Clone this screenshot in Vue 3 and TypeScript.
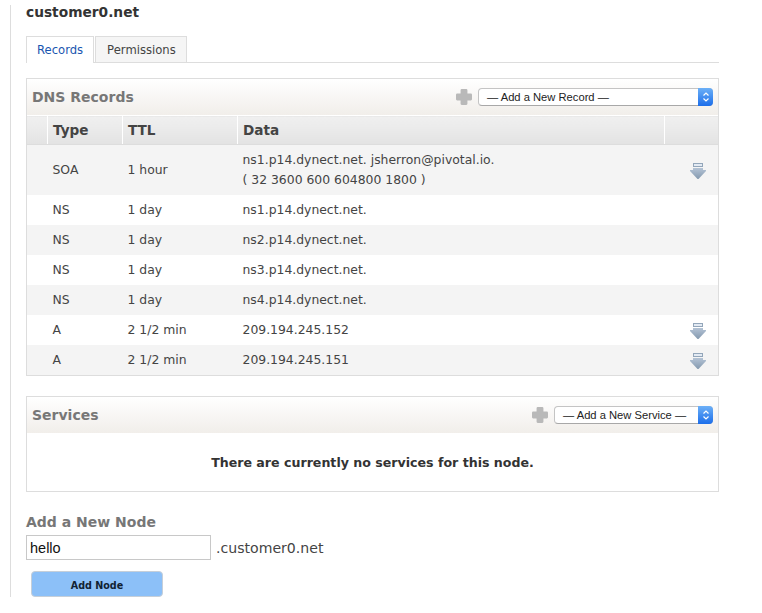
<template>
  <div class="page">
    <h1 class="title">customer0.net</h1>
    <div class="tabs">
      <a class="tab active">Records</a>
      <a class="tab">Permissions</a>
    </div>

    <section class="panel records">
      <header class="panel-head">
        <h2>DNS Records</h2>
        <div class="adder">
          <svg class="plus" width="16" height="16" viewBox="1 1 14 14"><path d="M6 1h4a1 1 0 0 1 1 1v3h3a1 1 0 0 1 1 1v4a1 1 0 0 1-1 1h-3v3a1 1 0 0 1-1 1H6a1 1 0 0 1-1-1v-3H2a1 1 0 0 1-1-1V6a1 1 0 0 1 1-1h3V2a1 1 0 0 1 1-1z" fill="#b9b9b9"/></svg>
          <div class="select wide">
            <span>— Add a New Record —</span>
            <i class="stepper"><svg width="8" height="12" viewBox="0 0 8 12"><path d="M1.500 4.500 4 2l2.500 2.500M1.500 7.500 4 10l2.500-2.500" fill="none" stroke="#fff" stroke-width="1.200"/></svg></i>
          </div>
        </div>
      </header>
      <table>
        <thead>
          <tr>
            <th class="c-blank"></th>
            <th class="c-type">Type</th>
            <th class="c-ttl">TTL</th>
            <th>Data</th>
            <th class="c-act"></th>
          </tr>
        </thead>
        <tbody>
          <tr v-for="(r, i) in records" :key="i" :class="{ soa: r.data.length > 1 }">
            <td></td>
            <td class="t-type">{{ r.type }}</td>
            <td class="t-ttl">{{ r.ttl }}</td>
            <td class="t-data"><div v-for="line in r.data" :key="line">{{ line }}</div></td>
            <td class="t-act">
              <svg v-if="r.edit" width="16" height="16" viewBox="0 0 16 16">
                <defs>
                  <linearGradient :id="`arrow${i}`" x1="0" y1="0" x2="0" y2="1">
                    <stop offset="0" stop-color="#b4c3d5"/>
                    <stop offset="1" stop-color="#8499af"/>
                  </linearGradient>
                </defs>
                <rect x="3.500" y="0.500" width="9" height="3" fill="#e3eaf3" stroke="#93a6ba"/>
                <path d="M3 5h10v2h3v1l-7.500 8h-1L0 8V7h3z" :fill="`url(#arrow${i})`"/>
              </svg>
            </td>
          </tr>
        </tbody>
      </table>
    </section>

    <section class="panel services">
      <header class="panel-head">
        <h2>Services</h2>
        <div class="adder">
          <svg class="plus" width="16" height="16" viewBox="1 1 14 14"><path d="M6 1h4a1 1 0 0 1 1 1v3h3a1 1 0 0 1 1 1v4a1 1 0 0 1-1 1h-3v3a1 1 0 0 1-1 1H6a1 1 0 0 1-1-1v-3H2a1 1 0 0 1-1-1V6a1 1 0 0 1 1-1h3V2a1 1 0 0 1 1-1z" fill="#b9b9b9"/></svg>
          <div class="select">
            <span>— Add a New Service —</span>
            <i class="stepper"><svg width="8" height="12" viewBox="0 0 8 12"><path d="M1.500 4.500 4 2l2.500 2.500M1.500 7.500 4 10l2.500-2.500" fill="none" stroke="#fff" stroke-width="1.200"/></svg></i>
          </div>
        </div>
      </header>
      <p class="empty">There are currently no services for this node.</p>
    </section>

    <h2 class="add-title">Add a New Node</h2>
    <div class="add-row">
      <input class="node-input" value="hello" />
      <span>.customer0.net</span>
    </div>
    <button class="add-btn">Add Node</button>
  </div>
</template>

<script setup lang="ts">
interface DnsRecord {
  type: string
  ttl: string
  data: string[]
  edit: boolean
}

const records: DnsRecord[] = [
  { type: 'SOA', ttl: '1 hour', data: ['ns1.p14.dynect.net. jsherron@pivotal.io.', '( 32 3600 600 604800 1800 )'], edit: true },
  { type: 'NS', ttl: '1 day', data: ['ns1.p14.dynect.net.'], edit: false },
  { type: 'NS', ttl: '1 day', data: ['ns2.p14.dynect.net.'], edit: false },
  { type: 'NS', ttl: '1 day', data: ['ns3.p14.dynect.net.'], edit: false },
  { type: 'NS', ttl: '1 day', data: ['ns4.p14.dynect.net.'], edit: false },
  { type: 'A', ttl: '2 1/2 min', data: ['209.194.245.152'], edit: true },
  { type: 'A', ttl: '2 1/2 min', data: ['209.194.245.151'], edit: true }
]
</script>

<style scoped>
.page {
  box-sizing: border-box;
  width: 709px;
  height: 592px;
  margin: 5px 0 0 10px;
  padding-left: 15px;
  border-left: 1px solid #ddd;
  font-family: "DejaVu Sans", sans-serif;
  font-size: 12.400px;
  color: #444;
}

.title {
  margin: 0;
  height: 31px;
  font-size: 13.750px;
  line-height: 15px;
  font-weight: bold;
  color: #333;
}

.tabs {
  display: flex;
  height: 26px;
  gap: 1px;
  border-bottom: 1px solid #ddd;
  font-size: 11.600px;
}

.tab {
  box-sizing: border-box;
  height: 26px;
  padding: 6px 10px 0;
  border: 1px solid #ddd;
  border-bottom: 0;
  background: #f5f5f5;
  color: #444;
}

.tab + .tab {
  padding-left: 11px;
}

.tab.active {
  height: 27px;
  background: #fff;
  color: #1a56b0;
}

.panel {
  border: 1px solid #ddd;
}

.records {
  margin-top: 15px;
}

.services {
  margin-top: 20px;
  height: 96px;
  box-sizing: border-box;
}

.panel-head {
  display: flex;
  align-items: center;
  justify-content: space-between;
  height: 36px;
  padding: 0 5px;
  background: linear-gradient(#fff, #f1eeea);
}

.panel-head h2,
.add-title {
  margin: 0;
  font-size: 14px;
  font-weight: bold;
  color: #777;
}

.adder {
  display: flex;
  align-items: center;
  gap: 6px;
}

.select {
  position: relative;
  box-sizing: border-box;
  width: 159px;
  height: 18px;
  padding-left: 8px;
  border: 1px solid #c4c4c4;
  border-bottom-color: #a8a8a8;
  border-radius: 4px;
  background: #fff;
  font-family: "Liberation Sans", sans-serif;
  font-size: 11.200px;
  line-height: 16px;
  color: #222;
}

.select.wide {
  width: 235px;
}

.stepper {
  position: absolute;
  top: -1px;
  right: -1px;
  display: flex;
  align-items: center;
  justify-content: center;
  width: 15px;
  height: 18px;
  border-radius: 0 4px 4px 0;
  background: linear-gradient(#6cb0f7, #1c6eea);
}

table {
  width: 100%;
  border-collapse: collapse;
  table-layout: fixed;
}

th {
  height: 28px;
  padding: 0 0 0 5px;
  border-top: 1px solid #fff;
  border-left: 1px solid #fff;
  border-bottom: 1px solid #ddd;
  background: linear-gradient(#f0f0f0, #e3e3e3);
  font-size: 13.600px;
  text-align: left;
  color: #444;
}

th:first-child {
  border-left: 0;
}

.c-blank {
  width: 15px;
}

.c-type {
  width: 69px;
}

.c-ttl {
  width: 109px;
}

.c-act {
  width: 48px;
}

td {
  height: 30px;
  padding: 0;
  line-height: 20px;
}

tbody tr.soa td {
  height: 50px;
}

tbody tr:nth-child(odd) {
  background: #f4f4f4;
}

.t-type,
.t-ttl,
.t-data {
  padding-left: 5px;
}

.t-act {
  text-align: right;
  padding-right: 12px;
}

.t-act svg {
  display: inline-block;
  vertical-align: middle;
}

.empty {
  margin: 0;
  padding-top: 22px;
  text-align: center;
  font-size: 12.600px;
  font-weight: bold;
  color: #333;
}

.add-title {
  margin-top: 21px;
  line-height: 18px;
}

.add-row {
  display: flex;
  align-items: center;
  gap: 5px;
  font-size: 14.100px;
  margin-top: 4px;
}

.node-input {
  box-sizing: border-box;
  width: 185px;
  height: 25px;
  padding: 0 3px;
  border: 1px solid #c8c8c8;
  font-family: "Liberation Sans", sans-serif;
  font-size: 14.500px;
  color: #111;
  outline: none;
}

.add-btn {
  display: block;
  box-sizing: border-box;
  width: 132px;
  height: 26px;
  margin: 11px 0 0 5px;
  padding-top: 3px;
  border: 1px solid #c6cfd9;
  border-radius: 4px;
  background: #8cc0f8;
  font-family: "DejaVu Sans", sans-serif;
  font-size: 9.600px;
  font-weight: bold;
  color: #123;
}
</style>

<style>
html,
body {
  background: #fff;
}
</style>
